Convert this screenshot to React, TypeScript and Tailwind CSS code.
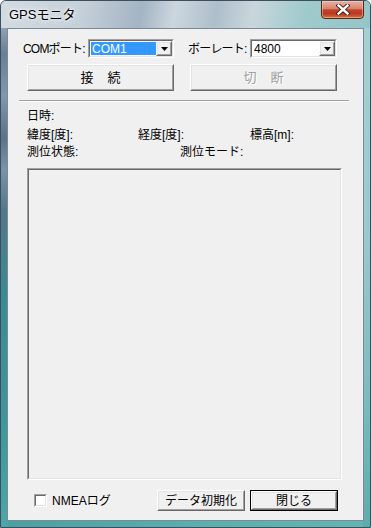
import React from "react";

const FONT = { fontFamily: '"Liberation Sans","Noto Sans CJK JP",sans-serif' };

function Raised({ className, children, disabled }: { className: string; children: React.ReactNode; disabled?: boolean }) {
  return (
    <div className={`border border-t-white border-l-white border-b-[#696969] border-r-[#696969] ${className}`}>
      <div
        className={`w-full h-full border border-t-[#e3e3e3] border-l-[#e3e3e3] border-b-[#a0a0a0] border-r-[#a0a0a0] bg-[#f0f0f0] flex items-center justify-center ${
          disabled ? "text-[#a0a0a0] [text-shadow:1px_1px_0_#ffffff]" : "text-black"
        }`}
      >
        {children}
      </div>
    </div>
  );
}

function Sunken({ className, children, inner }: { className: string; children?: React.ReactNode; inner?: string }) {
  return (
    <div className={`border border-t-[#a0a0a0] border-l-[#a0a0a0] border-b-white border-r-white ${className}`}>
      <div className={`w-full h-full border border-t-[#696969] border-l-[#696969] border-b-[#e3e3e3] border-r-[#e3e3e3] ${inner ?? "bg-white"}`}>
        {children}
      </div>
    </div>
  );
}

function Arrow() {
  return (
    <svg width="7" height="4" viewBox="0 0 7 4">
      <path d="M0 0H7L3.5 4Z" fill="#000" />
    </svg>
  );
}

function Combo({ value, selected, width }: { value: string; selected?: boolean; width: string }) {
  return (
    <Sunken className={`h-[19px] ${width}`}>
      <div className="flex h-full items-stretch">
        <div className="flex-1 flex items-center pl-[1px] py-[1px]">
          <div
            className={`h-full w-full flex items-center pl-[1px] text-[12px] leading-none ${
              selected ? "bg-[#3399ff] text-white" : "text-black"
            }`}
          >
            {value}
          </div>
        </div>
        <Raised className="w-[16px] h-[15px]">
          <Arrow />
        </Raised>
      </div>
    </Sunken>
  );
}

export default function App() {
  return (
    <div
      className="relative w-[371px] h-[528px] overflow-hidden flex flex-col px-[6px] pb-[6px] rounded-t-[6px] border border-[#3d4f5e] [background:linear-gradient(180deg,#b9c5cf_0%,#6a7f94_10%,#8197ab_18%,#5c7288_26%,#7b93a6_32%,#52778a_40%,#3a8a93_55%,#3f969c_80%,#4ea6a7_100%)_left_top/7px_100%_no-repeat,linear-gradient(180deg,#a6d2d3_0%,#98cacc_45%,#7cbcbd_75%,#5fabab_100%)_right_top/7px_100%_no-repeat,linear-gradient(90deg,#4b9fa2_0%,#5cb0ae_60%,#64b4b2_100%)]"
      style={FONT}
    >
      {/* title bar */}
      <div className="-mx-[6px] px-[6px] h-[27px] shrink-0 flex items-start bg-[linear-gradient(100deg,#d3dbe2_0%,#c6d0d9_22%,#a3b4c3_38%,#cdd6de_47%,#aebfcb_58%,#c9d6dc_68%,#9fcacc_82%,#94c6c8_100%)]">
        <div className="pt-[6px] pl-[2px] text-[13px] leading-[16px] text-black [text-shadow:0_0_6px_#ffffff,0_0_3px_#ffffff]">
          GPSモニタ
        </div>
        <div className="ml-auto -mt-[1px] w-[43px] h-[19px] rounded-b-[4px] border border-[#5a2418] bg-[linear-gradient(180deg,#eab3a4_0%,#d8836d_45%,#c2432b_52%,#b83a22_75%,#d8703f_100%)] flex items-center justify-center shadow-[inset_0_0_0_1px_rgba(255,220,200,0.45)]">
          <svg width="14" height="11" viewBox="0 0 14 11">
            <path d="M2.5 1.5L11.5 9.5M11.5 1.5L2.5 9.5" stroke="#3a1a14" strokeWidth="4.2" strokeLinecap="square" />
            <path d="M2.5 1.5L11.5 9.5M11.5 1.5L2.5 9.5" stroke="#ffffff" strokeWidth="2.4" strokeLinecap="square" />
          </svg>
        </div>
      </div>

      {/* client area */}
      <div className="flex-1 flex flex-col border border-[#7b8a96] bg-[#f0f0f0] text-[12px] leading-[16px] text-black">
        {/* row 1 */}
        <div className="mt-[10px] h-[19px] flex items-center">
          <div className="ml-[15px] w-[65px] whitespace-nowrap tracking-[-0.8px]">COMポート:</div>
          <Combo value="COM1" selected width="w-[86px]" />
          <div className="ml-[14px] w-[62px] whitespace-nowrap tracking-[-0.8px]">ボーレート:</div>
          <Combo value="4800" width="w-[87px]" />
        </div>

        {/* row 2 */}
        <div className="mt-[6px] h-[27px] flex">
          <Raised className="ml-[19px] w-[147px] h-[27px]">
            <span className="text-[13px] flex gap-[14px]">
              <span>接</span>
              <span>続</span>
            </span>
          </Raised>
          <Raised className="ml-[16px] w-[147px] h-[27px]" disabled>
            <span className="text-[13px] flex gap-[14px]">
              <span>切</span>
              <span>断</span>
            </span>
          </Raised>
        </div>

        {/* separator */}
        <div className="mt-[9px] ml-[11px] w-[330px] h-[2px] border-t border-t-[#a0a0a0] border-b border-b-white" />

        {/* info rows */}
        <div className="mt-[6px] ml-[19px] h-[16px]">日時:</div>
        <div className="mt-[3px] ml-[19px] h-[16px] flex">
          <div className="w-[111px]">緯度[度]:</div>
          <div className="w-[112px]">経度[度]:</div>
          <div>標高[m]:</div>
        </div>
        <div className="mt-[1px] ml-[19px] h-[16px] flex">
          <div className="w-[153px]">測位状態:</div>
          <div>測位モード:</div>
        </div>

        {/* log box */}
        <Sunken className="mt-[8px] ml-[19px] w-[315px] h-[312px]" inner="bg-[#f0f0f0]" />

        {/* bottom row */}
        <div className="mt-[10px] h-[21px] flex items-center">
          <Sunken className="ml-[26px] w-[13px] h-[13px]" />
          <div className="ml-[5px] w-[105px]">NMEAログ</div>
          <Raised className="w-[88px] h-[21px]">
            <span>データ初期化</span>
          </Raised>
          <div className="ml-[5px] w-[88px] h-[21px] border border-black">
            <Raised className="w-full h-full">
              <span>閉じる</span>
            </Raised>
          </div>
        </div>
      </div>
    </div>
  );
}
